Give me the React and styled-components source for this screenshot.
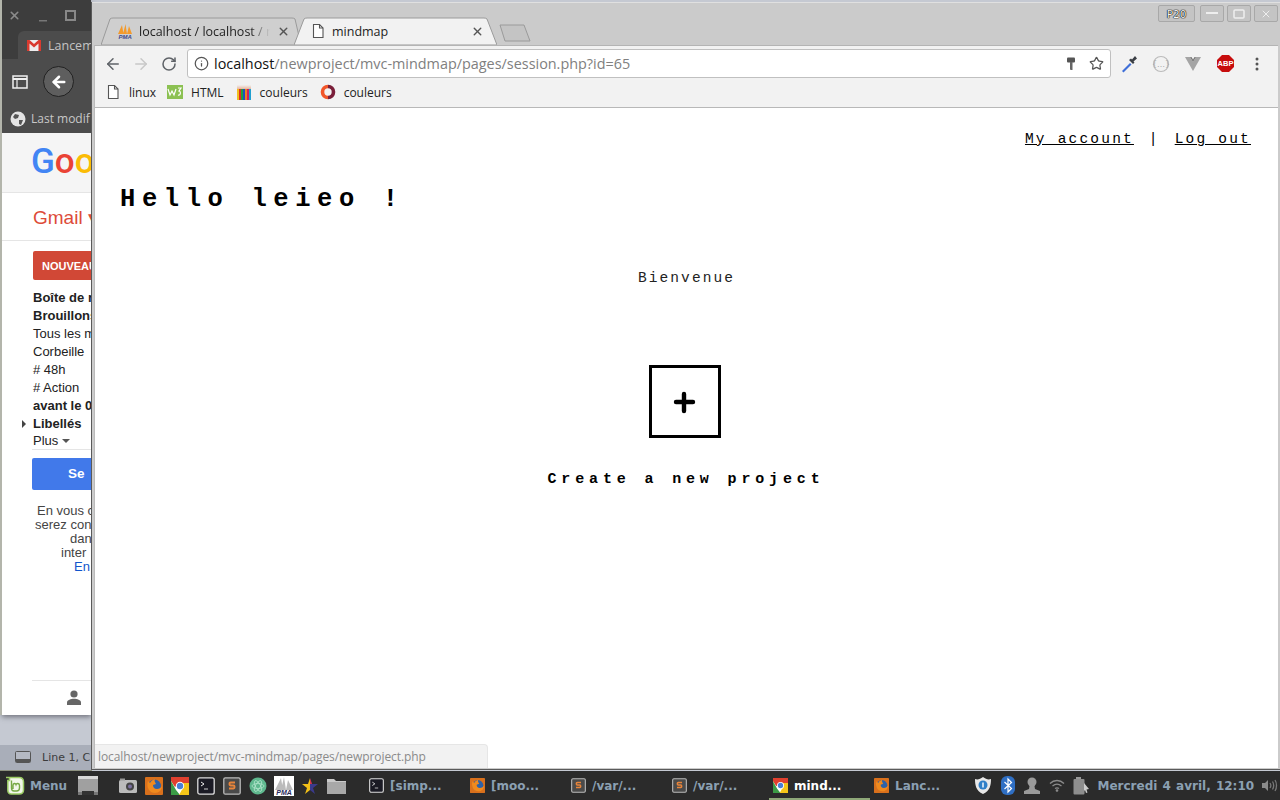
import React from 'react'
import styled, { createGlobalStyle } from 'styled-components'
import { ArrowLeft, ArrowRight, RotateCw, Info, Star, X } from 'lucide-react'

const Global = createGlobalStyle`
  html, body { margin: 0; padding: 0; width: 1280px; height: 800px; overflow: hidden; background: #2b2b2b; }
  * { box-sizing: border-box; }
`

const Screen = styled.div`
  width: 1280px;
  height: 800px;
  display: flex;
  flex-direction: column;
  font-family: "Open Sans", sans-serif;
`

const Desktop = styled.div`
  position: relative;
  height: 771px;
  overflow: hidden;
  background: #c5c9d2;
`

/* back window (gmail) */
const BackWindow = styled.div`
  position: absolute;
  left: 2px;
  top: 0;
  width: 89px;
  height: 715px;
  overflow: hidden;
  background: #fff;
  display: flex;
  flex-direction: column;
  box-shadow: -2px 0 0 #b3b5ab, 0 2px 5px rgba(60, 60, 70, 0.6);
`
const BackTitle = styled.div`
  height: 31px;
  flex: none;
  background: #3d3d3d;
  display: flex;
  align-items: center;
  gap: 18px;
  padding: 0 0 0 6px;
  color: #8b8b8b;
`
const BackTabRow = styled.div`
  height: 28px;
  flex: none;
  background: #3d3d3d;
  padding-left: 16px;
`
const BackTab = styled.div`
  height: 28px;
  background: #4c4c4c;
  border-radius: 6px 0 0 0;
  display: flex;
  align-items: center;
  gap: 7px;
  padding-left: 9px;
  color: #c4c4c4;
  font-size: 12.5px;
  white-space: nowrap;
  overflow: hidden;
  svg { flex: none; }
`
const BackToolbar = styled.div`
  height: 45px;
  flex: none;
  background: #4c4c4c;
  display: flex;
  align-items: center;
  gap: 15px;
  padding-left: 10px;
`
const BackCircle = styled.div`
  width: 31px;
  height: 31px;
  flex: none;
  border-radius: 50%;
  background: #5e5e5e;
  border: 1px solid #222;
  display: flex;
  align-items: center;
  justify-content: center;
`
const BackInfo = styled.div`
  height: 29px;
  flex: none;
  background: #4c4c4c;
  display: flex;
  align-items: center;
  gap: 5px;
  padding-left: 8px;
  color: #c8c8c8;
  font-size: 12px;
  white-space: nowrap;
  overflow: hidden;
`
const GoogleBar = styled.div`
  height: 60px;
  flex: none;
  background: #f5f5f5;
  border-bottom: 1px solid #e5e5e5;
  padding: 8px 0 0 29px;
  overflow: hidden;
  white-space: nowrap;
  font-family: Roboto, sans-serif;
  font-size: 35px;
  font-weight: 500;
`
const GoogleLetter = styled.span`
  color: ${p => p.$c};
`
const GmailBar = styled.div`
  height: 48px;
  flex: none;
  border-bottom: 1px solid #e5e5e5;
  padding: 13px 0 0 31px;
  font-family: "Liberation Sans", sans-serif;
  font-size: 19px;
  color: #dd4b39;
  white-space: nowrap;
`
const MailSide = styled.div`
  flex: 1;
  padding: 10px 0 0 31px;
  font-family: "Liberation Sans", sans-serif;
  font-size: 13px;
  color: #222;
  white-space: nowrap;
  display: flex;
  flex-direction: column;
`
const ComposeBtn = styled.div`
  height: 29px;
  flex: none;
  background: #d14836;
  border-radius: 2px 0 0 2px;
  color: #fff;
  font-size: 11px;
  font-weight: 700;
  padding: 9px 0 0 9px;
  margin-bottom: 9px;
  overflow: hidden;
`
const MailItem = styled.div`
  height: ${p => p.$h || 18}px;
  flex: none;
  line-height: ${p => p.$h || 18}px;
  font-weight: ${p => (p.$bold ? 700 : 400)};
  position: relative;
`
const TreeArrow = styled.span`
  position: absolute;
  left: -11px;
  top: 5px;
  width: 0;
  height: 0;
  border-left: 4px solid #444;
  border-top: 4px solid transparent;
  border-bottom: 4px solid transparent;
`
const PlusCaret = styled.span`
  display: inline-block;
  margin-left: 4px;
  vertical-align: 2px;
  border-top: 4px solid #555;
  border-left: 4px solid transparent;
  border-right: 4px solid transparent;
`
const Rule = styled.div`
  height: 1px;
  flex: none;
  background: #e5e5e5;
  margin-left: -1px;
`
const SignBtn = styled.div`
  height: 32px;
  flex: none;
  margin: 8px 0 0 -1px;
  background: #4179ea;
  border-radius: 2px 0 0 2px;
  color: #fff;
  font-weight: 700;
  font-size: 13.5px;
  padding: 8px 0 0 36px;
`
const Legal = styled.div`
  margin: 14px 0 0 0;
  color: #444;
  flex: none;
  height: 176px;
`
const LegalLine = styled.div`
  height: 14px;
  line-height: 14px;
  padding-left: ${p => p.$indent}px;
  color: ${p => p.$c || '#444'};
`
const PersonRow = styled.div`
  height: 33px;
  display: flex;
  align-items: center;
  padding-left: 33px;
`

const EditorStatus = styled.div`
  position: absolute;
  left: 0;
  top: 745px;
  width: 92px;
  height: 26px;
  background: #a9aeb9;
  display: flex;
  align-items: center;
  gap: 11px;
  padding-left: 15px;
  color: #3c3c3c;
  font-family: "DejaVu Sans", sans-serif;
  font-size: 11px;
  white-space: nowrap;
  overflow: hidden;
  border-bottom: 1px solid #8d917f;
`

/* front window (mindmap) */
const FrontWindow = styled.div`
  position: absolute;
  left: 91px;
  top: 2px;
  width: 1189px;
  height: 768px;
  background: #cbcbcb;
  border-left: 1px solid #5a5a5a;
  border-bottom: 1px solid #5a5a5a;
  box-shadow: inset 0 1px 0 #e0e0e0;
  display: flex;
  flex-direction: column;
  padding: 0 2px 1px 2px;
`
const TabStrip = styled.div`
  height: 43px;
  flex: none;
  display: flex;
  align-items: flex-end;
  padding-left: 7px;
  position: relative;
`
const Tab = styled.div`
  position: relative;
  width: ${p => p.$w}px;
  height: 28px;
  flex: none;
  margin-right: ${p => p.$mr || 0}px;
  z-index: ${p => (p.$active ? 2 : 1)};
  display: flex;
  align-items: center;
  font-size: 12.5px;
  color: #222;
  white-space: nowrap;
`
const TabShape = styled.svg`
  position: absolute;
  left: 0;
  top: 0;
`
const TabIcon = styled.span`
  position: relative;
  width: 16px;
  height: 16px;
  flex: none;
  margin-left: ${p => p.$ml}px;
  display: flex;
`
const TabLabel = styled.span`
  position: relative;
  margin-left: ${p => p.$ml}px;
  width: ${p => p.$w}px;
  overflow: hidden;
  ${p => p.$fade && 'mask-image: linear-gradient(90deg, #000 85%, transparent);'}
`
const TabClose = styled.span`
  position: relative;
  margin-left: ${p => p.$ml}px;
  display: flex;
  color: #555;
`
const NewTab = styled.svg`
  flex: none;
  margin: 0 0 3px 0;
  position: relative;
  z-index: 0;
`
const TitleButtons = styled.div`
  position: absolute;
  right: 0;
  top: 3px;
  display: flex;
  gap: 3px;
`
const TitleBtn = styled.div`
  width: ${p => p.$w}px;
  height: 17px;
  margin-right: ${p => p.$mr || 0}px;
  border: 1px solid #a8a8a8;
  border-radius: 2px;
  background: #c4c4c4;
  color: #f4f4f4;
  display: flex;
  align-items: center;
  justify-content: center;
  font-family: "DejaVu Sans", sans-serif;
  font-size: 10.5px;
  text-shadow: 0 0 1px #000, 0 0 1px #000, 0 0 1px #000;
`
const Toolbar = styled.div`
  height: 34px;
  flex: none;
  background: #f2f2f2;
  display: flex;
  align-items: center;
  padding: 2px 0 0 9px;
  border-top: 1px solid #b4b4b4;
  border-left: 1px solid #bbb;
  color: #5a5a5a;
`
const NavBtn = styled.span`
  width: 28px;
  height: 24px;
  flex: none;
  display: flex;
  align-items: center;
  padding-left: ${p => p.$pl || 0}px;
  color: ${p => p.$c || '#5f6368'};
`
const Omnibox = styled.div`
  width: 924px;
  height: 29px;
  margin-left: -1px;
  flex: none;
  background: #fff;
  border: 1px solid #c0c0c0;
  border-radius: 3px;
  display: flex;
  align-items: center;
  padding: 0 6px 0 6px;
  color: #555;
`
const Url = styled.div`
  margin-left: 5px;
  flex: 1;
  font-size: 14.4px;
  color: #808080;
  white-space: nowrap;
`
const UrlHost = styled.span`
  color: #111;
`
const OmniStar = styled(Star)`
  margin-left: 13px;
`
const Extensions = styled.div`
  display: flex;
  align-items: center;
  padding-left: 2px;
`
const ExtBtn = styled.span`
  width: 32px;
  flex: none;
  display: flex;
  justify-content: center;
`
const Bookmarks = styled.div`
  height: 29px;
  flex: none;
  background: #f2f2f2;
  border-left: 1px solid #bbb;
  border-bottom: 1px solid #b8b8b8;
  display: flex;
  align-items: center;
  padding: 0 0 2px 10px;
  font-size: 12px;
  color: #222;
`
const Bookmark = styled.div`
  display: flex;
  align-items: center;
  gap: ${p => p.$gap}px;
  margin-right: ${p => p.$mr}px;
`
const Page = styled.div`
  flex: 1;
  background: #fff;
  border-left: 1px solid #bbb;
  font-family: "Liberation Mono", "Courier New", monospace;
  color: #000;
  display: flex;
  flex-direction: column;
  padding-top: 22px;
`
const TopLinks = styled.div`
  align-self: flex-end;
  margin-right: 27px;
  font-size: 14.5px;
  letter-spacing: 2.2px;
  line-height: 18px;
  white-space: pre;
`
const TopLink = styled.a`
  color: #000;
  text-decoration: underline;
`
const LinkSep = styled.span`
  margin: 0 4px;
`
const Hello = styled.h1`
  margin: 37px 0 0 25px;
  font-size: 25.5px;
  line-height: 30px;
  font-weight: 700;
  letter-spacing: 6.6px;
  white-space: pre;
`
const Welcome = styled.div`
  margin-top: 54px;
  text-align: center;
  font-size: 14.5px;
  line-height: 18px;
  letter-spacing: 2.1px;
  color: #222;
`
const AddBox = styled.a`
  align-self: center;
  margin: 78px 4px 0 0;
  width: 72px;
  height: 73px;
  border: 3px solid #000;
  display: flex;
  align-items: center;
  justify-content: center;
`
const CreateText = styled.div`
  margin: 33px 1px 0 0;
  text-align: center;
  font-size: 15px;
  font-weight: 700;
  line-height: 18px;
  letter-spacing: 4.85px;
`
const StatusBubble = styled.div`
  position: absolute;
  left: 3px;
  bottom: 1px;
  width: 393px;
  height: 24px;
  background: #f2f2f2;
  border: 1px solid #e6e6e6;
  border-left: 0;
  border-bottom: 0;
  border-radius: 0 4px 0 0;
  padding-left: 3px;
  font-size: 12px;
  letter-spacing: -0.08px;
  line-height: 23px;
  color: #8a8a8a;
  white-space: nowrap;
`

/* bottom panel */
const Panel = styled.div`
  height: 29px;
  flex: none;
  background: #2b2b2b;
  display: flex;
  align-items: center;
  font-family: "DejaVu Sans", sans-serif;
  font-size: 12px;
  font-weight: 700;
  color: #8ba0b3;
  white-space: nowrap;
`
const MenuBtn = styled.div`
  display: flex;
  align-items: center;
  gap: 5px;
  padding-left: 5px;
  width: 115px;
  flex: none;
`
const DesktopSlot = styled.span`
  margin-left: 5px;
  display: flex;
`
const Launcher = styled.span`
  width: 26px;
  flex: none;
  display: flex;
  justify-content: center;
`
const TaskBtn = styled.div`
  width: 101px;
  height: 29px;
  flex: none;
  display: flex;
  align-items: center;
  gap: 6px;
  padding-left: 4px;
  color: ${p => (p.$active ? '#fff' : '#8ba0b3')};
  box-shadow: ${p => (p.$active ? 'inset 0 -2px 0 #8fa878' : 'none')};
  svg { width: 15px; height: 15px; flex: none; }
`
const TaskList = styled.div`
  display: flex;
  margin-left: 16px;
`
const Tray = styled.div`
  margin-left: auto;
  display: flex;
  align-items: center;
  padding-right: 4px;
`
const TrayIcon = styled.span`
  width: 24.5px;
  flex: none;
  display: flex;
  justify-content: center;
`
const Clock = styled.span`
  margin: 0 7px 0 4px;
  word-spacing: 1px;
`

const FileIcon = ({ c = '#555' }) => (
  <svg width="16" height="16" viewBox="0 0 16 16" fill="none" stroke={c} strokeWidth="1.1">
    <path d="M3.5 1.5h6l3.5 3.5v9.5h-9.5z" fill="#fff" />
    <path d="M9.5 1.5v3.5h3.5" />
  </svg>
)
const PmaIcon = ({ size = 16 }) => (
  <svg width={size} height={size} viewBox="0 0 16 16">
    <path d="M1 11L5 2l1.5 9zM6 11l2.5-10L10 11zM10 11l2-8 3 8z" fill="#f39a2b" />
    <text x="1.5" y="15.5" fontFamily="Liberation Sans" fontWeight="700" fontStyle="italic" fontSize="6" fill="#3b4a8c">PMA</text>
  </svg>
)
const W3Icon = () => (
  <svg width="16" height="14" viewBox="0 0 16 14">
    <rect width="16" height="14" fill="#8cc152" />
    <path d="M1 4l2 6 2-4 2 4 2-6M11 3h3l-2 3c2 0 2 5-1 4" fill="none" stroke="#fff" strokeWidth="1.2" />
  </svg>
)
const PencilsIcon = () => (
  <svg width="16" height="16" viewBox="0 0 16 16">
    {['#f0c020', '#e03020', '#20a040', '#2050c0', '#f08020', '#d02060', '#20a0d0'].map((c, i) => (
      <g key={c}>
        <rect x={1 + i * 2} y="5" width="2" height="11" fill={c} />
        <path d={`M${1 + i * 2} 5l1-4 1 4z`} fill="#e8b8a0" />
      </g>
    ))}
  </svg>
)
const RingIcon = () => (
  <svg width="16" height="16" viewBox="0 0 16 16" fill="none">
    <path d="M8 2.5a5.5 5.5 0 0 1 0 11" stroke="#7a1f3a" strokeWidth="3.6" />
    <path d="M8 13.5a5.5 5.5 0 0 1 0-11" stroke="#f2562a" strokeWidth="3.6" />
  </svg>
)
const KeyIcon = () => (
  <svg width="10" height="14" viewBox="0 0 10 14">
    <rect x="1" y="0.5" width="8" height="5" rx="1" fill="#555" />
    <path d="M4 5h2.5v8h-2l-0.5-1V5z" fill="#666" />
  </svg>
)
const Dropper = () => (
  <svg width="18" height="18" viewBox="0 0 18 18">
    <path d="M2 16l8-8 1.5 1.5-8 8z" fill="#3f6fd8" />
    <path d="M9 5l4 4 1.5-1.5-1-1L17 3.5 15 1l-3 3.500-1-1z" fill="#3b3f45" />
  </svg>
)
const BracesIcon = () => (
  <svg width="18" height="18" viewBox="0 0 18 18" fill="none">
    <circle cx="9" cy="9" r="7.5" stroke="#bbb" strokeWidth="1.2" />
    <text x="9" y="12" textAnchor="middle" fontFamily="DejaVu Sans" fontSize="8" fill="#aaa">{'{…}'}</text>
  </svg>
)
const VeeIcon = () => (
  <svg width="16" height="14" viewBox="0 0 16 14">
    <path d="M0 0h5l3 5 3-5h5L8 14z" fill="#a5a5a5" />
    <path d="M5 0l3 5 3-5h-1.500L8 2.500 6.500 0z" fill="#777" />
  </svg>
)
const AbpIcon = () => (
  <svg width="17" height="17" viewBox="0 0 17 17">
    <path d="M5 0h7l5 5v7l-5 5H5l-5-5V5z" fill="#c70d0d" />
    <text x="8.500" y="11.200" textAnchor="middle" fontFamily="Liberation Sans" fontWeight="700" fontSize="7.500" fill="#fff">ABP</text>
  </svg>
)
const DotsIcon = () => (
  <svg width="4" height="14" viewBox="0 0 4 14" fill="#555">
    <circle cx="2" cy="2" r="1.500" />
    <circle cx="2" cy="7" r="1.500" />
    <circle cx="2" cy="12" r="1.500" />
  </svg>
)
const GmailIcon = () => (
  <svg width="14" height="11" viewBox="0 0 14 11">
    <rect width="14" height="11" fill="#eee" />
    <path d="M0 0h2.500L7 4l4.500-4H14v11h-2.500V3.500L7 7.500l-4.500-4V11H0z" fill="#d93a2f" />
  </svg>
)
const SidebarIcon = () => (
  <svg width="16" height="14" viewBox="0 0 16 14" fill="none" stroke="#f0f0f0">
    <rect x="1" y="1" width="14" height="12" strokeWidth="1.500" />
    <path d="M1 4h14" strokeWidth="2" />
    <path d="M5 4v9" strokeWidth="1.200" />
  </svg>
)
const GlobeIcon = () => (
  <svg width="16" height="16" viewBox="0 0 16 16">
    <circle cx="8" cy="8" r="7.500" fill="#e4e4e4" />
    <path d="M5 3l4 1-1 3-3 1-2-2zM9 9l4 0-2 5-2-1z" fill="#555" />
  </svg>
)
const MonitorIcon = () => (
  <svg width="16" height="13" viewBox="0 0 16 13">
    <rect x="0.500" y="0.500" width="15" height="11" rx="1" fill="#b5b9c3" stroke="#555" />
    <rect x="1" y="8" width="14" height="3" fill="#555" />
  </svg>
)
const PersonIcon = () => (
  <svg width="16" height="15" viewBox="0 0 16 15" fill="#666">
    <circle cx="8" cy="4" r="3.600" />
    <path d="M1 15v-2.500C1 10 5 8.800 8 8.800s7 1.200 7 3.700V15z" />
  </svg>
)
const MintLogo = () => (
  <svg width="20" height="20" viewBox="0 0 20 20" fill="none">
    <path d="M1 1.500h3.500l0 3H2.800V14c0 2.500 1.300 4 3.700 4H14c2.700 0 4.500-1.500 4.500-4V6c0-2.800-1.800-4.500-4.500-4.500H4.500" fill="#f2f7ea" stroke="#9ccc65" strokeWidth="1.500" />
    <path d="M6.500 4.500V12c0 2 1 3 2.500 3h2.500c2 0 3-1 3-3V9.500c0-2.500-3-2.500-3.500-1-0.500-1.500-3-1.500-3 1V13" stroke="#76a844" strokeWidth="1.400" />
  </svg>
)
const ShowDesktop = () => (
  <svg width="22" height="20" viewBox="0 0 22 20">
    <rect x="1" y="0" width="20" height="3" fill="#d8d8d8" />
    <rect x="1" y="3" width="20" height="13" fill="#a0a0a0" />
    <rect x="1" y="16" width="20" height="3" fill="#777" />
    <rect x="5" y="15" width="12" height="4" fill="#333" />
  </svg>
)
const CameraIcon = () => (
  <svg width="20" height="16" viewBox="0 0 20 16">
    <rect x="1" y="2" width="18" height="13" rx="1.500" fill="#bbb" />
    <rect x="2" y="0.500" width="5" height="2" fill="#999" />
    <circle cx="12" cy="8.500" r="4" fill="#444" />
    <circle cx="12" cy="8.500" r="2" fill="#7a6fa0" />
  </svg>
)
const FirefoxIcon = () => (
  <svg width="18" height="18" viewBox="0 0 18 18">
    <rect width="18" height="18" rx="1" fill="#d9701c" />
    <circle cx="9.500" cy="9" r="6.500" fill="#2d62a8" />
    <path d="M3 4c-2 6 1 12 7 12 4 0 7-3 7-7-1 2-3 3-5 3-3 0-4-2-4-4l3-1c-1-2-2-3-1-5-3 1-4 2-5 4z" fill="#f08a1d" />
  </svg>
)
const ChromeIcon = () => (
  <svg width="18" height="18" viewBox="0 0 18 18">
    <rect width="18" height="18" fill="#fff" />
    <path d="M0 0h18v6H9L4 10 0 4z" fill="#e0402f" />
    <path d="M0 4l5 9 4 5H0z" fill="#3b9b45" />
    <path d="M18 6v12H8l5-9-4-3z" fill="#f5c518" />
    <circle cx="9" cy="9" r="4.200" fill="#fff" />
    <circle cx="9" cy="9" r="3.200" fill="#4a7fd6" />
  </svg>
)
const TermIcon = () => (
  <svg width="18" height="18" viewBox="0 0 18 18" fill="none">
    <rect x="0.800" y="0.800" width="16.400" height="16.400" rx="2" fill="#1a1a24" stroke="#ddd" strokeWidth="1.300" />
    <path d="M4 5l3 2-3 2" stroke="#eee" />
    <path d="M7 12h4" stroke="#ccc" />
  </svg>
)
const SublimeIcon = () => (
  <svg width="18" height="18" viewBox="0 0 18 18" fill="none">
    <rect x="0.800" y="0.800" width="16.400" height="16.400" rx="1.500" fill="#4a4a4a" stroke="#bbb" strokeWidth="1.300" />
    <path d="M12 5.500H7.500C6 5.500 6 8.500 7.500 8.500h3c1.500 0 1.500 3-0 3H6" stroke="#e8843a" strokeWidth="1.800" />
  </svg>
)
const AtomIcon = () => (
  <svg width="18" height="18" viewBox="0 0 18 18" fill="none">
    <circle cx="9" cy="9" r="8.500" fill="#5fb88e" />
    <g stroke="#b8e8d0" strokeWidth="0.700">
      <ellipse cx="9" cy="9" rx="6" ry="2.500" />
      <ellipse cx="9" cy="9" rx="6" ry="2.500" transform="rotate(60 9 9)" />
      <ellipse cx="9" cy="9" rx="6" ry="2.500" transform="rotate(120 9 9)" />
    </g>
  </svg>
)
const PmaTile = () => (
  <svg width="20" height="20" viewBox="0 0 20 20">
    <rect width="20" height="20" fill="#fff" />
    <path d="M1 14L7 2l2 12zM7 14l3-13 2 13zM12 14l2-10 5 10z" fill="#bbb" />
    <text x="10" y="18.500" textAnchor="middle" fontFamily="Liberation Sans" fontWeight="700" fontStyle="italic" fontSize="7" fill="#2a2a5a">PMA</text>
  </svg>
)
const StarIcon = () => (
  <svg width="18" height="18" viewBox="0 0 18 18">
    <path d="M9 1l2 6h6l-5 4 2 6-5-4z" fill="#3a3a8c" />
    <path d="M9 1L7 7H1l5 4-2 6 5-4z" fill="#f2c018" />
    <path d="M9 1l2 6H9z" fill="#d83040" />
  </svg>
)
const FolderIcon = () => (
  <svg width="19" height="16" viewBox="0 0 19 16">
    <path d="M0 1h7l2 2h10v13H0z" fill="#c9c9c9" />
    <rect y="4" width="19" height="12" fill="#a8a8a8" />
  </svg>
)
const ShieldIcon = () => (
  <svg width="16" height="17" viewBox="0 0 16 17">
    <path d="M0 2c3 1 5 0 8-2 3 2 5 3 8 2 0 6-1 12-8 15C1 14 0 8 0 2z" fill="#e8e8e8" />
    <circle cx="8" cy="8" r="4.500" fill="#2f7fc8" />
    <rect x="7.300" y="5.500" width="1.400" height="5" fill="#fff" />
  </svg>
)
const BluetoothIcon = () => (
  <svg width="14" height="19" viewBox="0 0 14 19" fill="none">
    <rect width="14" height="19" rx="6" fill="#2f6fc4" />
    <path d="M3.500 6l7 6.500L7 16V3l3.500 3.500L3.500 13" stroke="#fff" strokeWidth="1.200" />
  </svg>
)
const PersonTray = () => (
  <svg width="16" height="17" viewBox="0 0 16 17" fill="#9a9a9a">
    <circle cx="8" cy="5" r="4.500" />
    <path d="M5.500 9h5l0.500 3 5 2v3H0v-3l5-2z" />
  </svg>
)
const WifiIcon = () => (
  <svg width="16" height="13" viewBox="0 0 16 13" fill="none" stroke="#8a8a8a" strokeWidth="1.300">
    <path d="M1 4.500c4-4 10-4 14 0M3.500 7c3-2.500 6-2.500 9 0M6 9.500c1.500-1 2.500-1 4 0" />
    <circle cx="8" cy="11.500" r="0.700" fill="#8a8a8a" />
  </svg>
)
const BatteryIcon = () => (
  <svg width="17" height="18" viewBox="0 0 17 18">
    <rect x="3" y="0" width="5" height="2" fill="#999" />
    <rect x="0.500" y="2" width="11" height="15.500" rx="1" fill="#8e8e8e" />
    <path d="M11 6l5 6-2.500 0.500 1 3-1.500 0.500-1-3L11 14z" fill="#ccc" />
  </svg>
)
const VolumeIcon = () => (
  <svg width="17" height="15" viewBox="0 0 17 15" fill="none" stroke="#777" strokeWidth="1.300">
    <path d="M1 5h3l3-3v11l-3-3H1z" fill="#8a8a8a" stroke="none" />
    <path d="M9 5c1 1.500 1 3.500 0 5M11.500 3.500c1.500 2.500 1.500 5.500 0 8M14 2c2 3 2 8 0 11" />
  </svg>
)
const PlusIcon = () => (
  <svg width="24" height="24" viewBox="0 0 24 24" fill="none" stroke="#000" strokeWidth="4.400" strokeLinecap="round">
    <path d="M11 4v17M3 12h17" />
  </svg>
)

const launchers = [CameraIcon, FirefoxIcon, ChromeIcon, TermIcon, SublimeIcon, AtomIcon, PmaTile, StarIcon, FolderIcon]
const tasks = [
  { Icon: TermIcon, label: '[simp...' },
  { Icon: FirefoxIcon, label: '[moo...' },
  { Icon: SublimeIcon, label: '/var/...' },
  { Icon: SublimeIcon, label: '/var/...' },
  { Icon: ChromeIcon, label: 'mind...', active: true },
  { Icon: FirefoxIcon, label: 'Lanc...' }
]
const folders = [
  { text: 'Boîte de r', bold: true },
  { text: 'Brouillons', bold: true },
  { text: 'Tous les m' },
  { text: 'Corbeille' },
  { text: '# 48h' },
  { text: '# Action' },
  { text: 'avant le 0', bold: true }
]

function GmailWindow() {
  return (
    <BackWindow>
      <BackTitle>
        <X size={13} strokeWidth={3} />
        <svg width="8" height="12" viewBox="0 0 8 12"><rect y="10" width="8" height="1.500" fill="#777" /></svg>
        <svg width="12" height="11" viewBox="0 0 12 11" fill="none" stroke="#888" strokeWidth="2"><rect x="1" y="1" width="9" height="9" /></svg>
      </BackTitle>
      <BackTabRow>
        <BackTab><GmailIcon />Lancem</BackTab>
      </BackTabRow>
      <BackToolbar>
        <SidebarIcon />
        <BackCircle><ArrowLeft size={18} strokeWidth={3.400} color="#fff" /></BackCircle>
      </BackToolbar>
      <BackInfo><GlobeIcon />Last modif</BackInfo>
      <GoogleBar>
        <GoogleLetter $c="#4285f4">G</GoogleLetter>
        <GoogleLetter $c="#ea4335">o</GoogleLetter>
        <GoogleLetter $c="#fbbc05">o</GoogleLetter>
      </GoogleBar>
      <GmailBar>Gmail ▾</GmailBar>
      <MailSide>
        <ComposeBtn>NOUVEAU</ComposeBtn>
        {folders.map(f => <MailItem key={f.text} $bold={f.bold}>{f.text}</MailItem>)}
        <MailItem $bold><TreeArrow />Libellés</MailItem>
        <MailItem $h={16}>Plus<PlusCaret /></MailItem>
        <Rule />
        <SignBtn>Se</SignBtn>
        <Legal>
          <LegalLine $indent={4}>En vous c</LegalLine>
          <LegalLine $indent={2}>serez con</LegalLine>
          <LegalLine $indent={37}>dan</LegalLine>
          <LegalLine $indent={28}>inter</LegalLine>
          <LegalLine $indent={41} $c="#15c">En</LegalLine>
        </Legal>
        <Rule />
        <PersonRow><PersonIcon /></PersonRow>
      </MailSide>
    </BackWindow>
  )
}

function ChromeWindow() {
  return (
    <FrontWindow>
      <TabStrip>
        <Tab $w={200} $mr={-7}>
          <TabShape width="200" height="28" viewBox="0 0 200 28">
            <path d="M0 28L9 2q1-1 3-1h179q2 0 3 1l6 26z" fill="#cfcfcf" stroke="#9a9a9a" />
          </TabShape>
          <TabIcon $ml={16}><PmaIcon /></TabIcon>
          <TabLabel $ml={6} $w={131} $fade>localhost / localhost / mindmap</TabLabel>
          <TabClose $ml={7}><X size={13} strokeWidth={2.600} /></TabClose>
        </Tab>
        <Tab $w={203} $active>
          <TabShape width="203" height="28" viewBox="0 0 203 28">
            <path d="M0 28L10 2q1-1 3-1h177q2 0 3 1l10 26z" fill="#f2f2f2" stroke="#9a9a9a" />
          </TabShape>
          <TabIcon $ml={16}><FileIcon /></TabIcon>
          <TabLabel $ml={6} $w={134}>mindmap</TabLabel>
          <TabClose $ml={5}><X size={13} strokeWidth={2.600} /></TabClose>
        </Tab>
        <NewTab width="36" height="18" viewBox="0 0 36 18">
          <path d="M3 1h24l6 16H8z" fill="#c4c4c4" stroke="#9a9a9a" />
        </NewTab>
        <TitleButtons>
          <TitleBtn $w={37} $mr={2}>P20</TitleBtn>
          <TitleBtn $w={24}><svg width="12" height="3"><rect width="12" height="2" fill="#eee" /></svg></TitleBtn>
          <TitleBtn $w={24}><svg width="12" height="10" fill="none" stroke="#eee" strokeWidth="1.500"><rect x="1" y="1" width="10" height="8" rx="1" /></svg></TitleBtn>
          <TitleBtn $w={24}><X size={12} strokeWidth={2} color="#eee" /></TitleBtn>
        </TitleButtons>
      </TabStrip>
      <Toolbar>
        <NavBtn><ArrowLeft size={18} strokeWidth={2} /></NavBtn>
        <NavBtn $c="#c8c8c8"><ArrowRight size={18} strokeWidth={2} /></NavBtn>
        <NavBtn $pl={1}><RotateCw size={16} strokeWidth={2.300} /></NavBtn>
        <Omnibox>
          <Info size={15} strokeWidth={2} />
          <Url><UrlHost>localhost</UrlHost>/newproject/mvc-mindmap/pages/session.php?id=65</Url>
          <KeyIcon />
          <OmniStar size={15} strokeWidth={2} />
        </Omnibox>
        <Extensions>
          <ExtBtn><Dropper /></ExtBtn>
          <ExtBtn><BracesIcon /></ExtBtn>
          <ExtBtn><VeeIcon /></ExtBtn>
          <ExtBtn><AbpIcon /></ExtBtn>
          <ExtBtn><DotsIcon /></ExtBtn>
        </Extensions>
      </Toolbar>
      <Bookmarks>
        <Bookmark $gap={8} $mr={11}><FileIcon />linux</Bookmark>
        <Bookmark $gap={8} $mr={12}><W3Icon />HTML</Bookmark>
        <Bookmark $gap={8} $mr={12}><PencilsIcon />couleurs</Bookmark>
        <Bookmark $gap={8} $mr={0}><RingIcon />couleurs</Bookmark>
      </Bookmarks>
      <Page>
        <TopLinks>
          <TopLink href="#">My account</TopLink><LinkSep> | </LinkSep><TopLink href="#">Log out</TopLink>
        </TopLinks>
        <Hello>Hello leieo !</Hello>
        <Welcome>Bienvenue</Welcome>
        <AddBox href="#"><PlusIcon /></AddBox>
        <CreateText>Create a new project</CreateText>
      </Page>
      <StatusBubble>localhost/newproject/mvc-mindmap/pages/newproject.php</StatusBubble>
    </FrontWindow>
  )
}

export default function App() {
  return (
    <Screen>
      <Global />
      <Desktop>
        <GmailWindow />
        <EditorStatus><MonitorIcon />Line 1, C</EditorStatus>
        <ChromeWindow />
      </Desktop>
      <Panel>
        <MenuBtn><MintLogo />Menu<DesktopSlot><ShowDesktop /></DesktopSlot></MenuBtn>
        {launchers.map((L, i) => <Launcher key={i}><L /></Launcher>)}
        <TaskList>
          {tasks.map((t, i) => (
            <TaskBtn key={i} $active={t.active}><t.Icon />{t.label}</TaskBtn>
          ))}
        </TaskList>
        <Tray>
          <TrayIcon><ShieldIcon /></TrayIcon>
          <TrayIcon><BluetoothIcon /></TrayIcon>
          <TrayIcon><PersonTray /></TrayIcon>
          <TrayIcon><WifiIcon /></TrayIcon>
          <TrayIcon><BatteryIcon /></TrayIcon>
          <Clock>Mercredi 4 avril, 12:10</Clock>
          <VolumeIcon />
        </Tray>
      </Panel>
    </Screen>
  )
}
